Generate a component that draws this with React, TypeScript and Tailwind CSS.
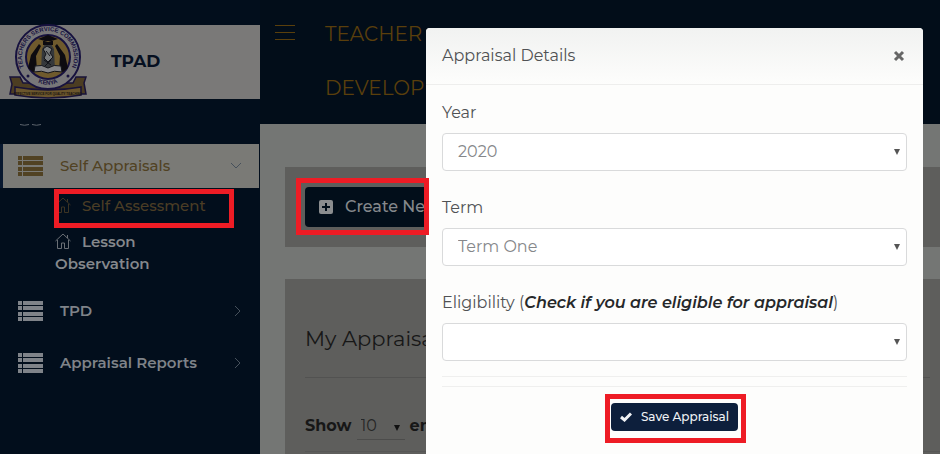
import type { ReactNode } from 'react';

const FONT = "font-['Montserrat','Inter','Liberation_Sans',sans-serif]";

function Highlight({ className }: { className: string }) {
  return (
    <span
      aria-hidden="true"
      className={`pointer-events-none absolute z-30 border-5 border-[#ee1c25] ${className}`}
    />
  );
}

function Crest() {
  return (
    <svg viewBox="0 0 78 76" className="h-[76px] w-[78px] shrink-0" role="img" aria-label="Teachers Service Commission Kenya">
      <defs>
        <path id="ringTop" d="M17.700 48 A26 26 0 1 1 60.300 48" />
        <path id="ringBottom" d="M25 56 Q39 65.500 53 56" />
      </defs>
      <path d="M1 53h10l3 6h50l3-6h10l-2 6 2 11H66l-3-4-24 3-24-3-3 4H1l2-10z" fill="#4c3d22" stroke="#191338" strokeWidth="1.5" />
      <circle cx="39" cy="33" r="32" fill="#787779" stroke="#17123f" strokeWidth="2" />
      <circle cx="39" cy="33" r="22" fill="#6f5a2d" stroke="#17123f" strokeWidth="2" />
      <path d="M19 44 22 31 30 20 32 22 27 32 28 47 24 48zM59 44 56 31 48 20 46 22 51 32 50 47 54 48z" fill="#0d0b10" />
      <path d="M32 47 33 25 36 20h6l3 5 1 22z" fill="#35383b" />
      <path d="M29 15 39 11 49 15 39 18zM34 17v4h10v-4z" fill="#0d0b10" />
      <path d="M34 25l4-3 5 3-2 4 3 4-5 5-4-4 2-4zM37 27l4 5M42 36l-6 6M35 36l7 5" fill="#777a7c" stroke="#121319" strokeWidth="1" />
      <path d="M26 42q7-2 13 2 6-4 13-2l1 6q-8-2-14 1-6-3-14-1z" fill="#858587" stroke="#121319" strokeWidth="1" />
      <g fill="#17123f" fontFamily="'Liberation Sans', sans-serif" fontWeight="700">
        <text fontSize="6">
          <textPath href="#ringTop" startOffset="50%" textAnchor="middle">TEACHERS SERVICE COMMISSION</textPath>
        </text>
        <text fontSize="6">
          <textPath href="#ringBottom" startOffset="50%" textAnchor="middle">KENYA</textPath>
        </text>
      </g>
      <circle cx="19" cy="52" r="1.5" fill="#17123f" />
      <circle cx="59" cy="52" r="1.5" fill="#17123f" />
      <path d="M6 63q33 6 66 0v8q-33 6-66 0z" fill="#6b562c" stroke="#191338" strokeWidth="1.5" />
      <text x="39" y="71" textAnchor="middle" fontSize="3" fontWeight="700" fill="#17110f" fontFamily="'Liberation Sans', sans-serif">
        EFFECTIVE SERVICE FOR QUALITY TEACHING
      </text>
    </svg>
  );
}

function ListIcon() {
  return (
    <svg viewBox="0 0 25 20" className="h-5 w-[25px] shrink-0" fill="currentColor" aria-hidden="true">
      {[0, 5, 11, 16].map((y) => (
        <g key={y}>
          <rect x="0" y={y} width="4" height="4" />
          <rect x="5" y={y} width="20" height="4" />
        </g>
      ))}
    </svg>
  );
}

function HomeIcon() {
  return (
    <svg viewBox="0 0 16 16" className="mr-[11px] inline-block size-4 align-[-2px] opacity-80" fill="none" stroke="currentColor" aria-hidden="true">
      <path d="M.5 8 8 1l7.500 7M2.500 7v8.500h4V10h3v5.500h4V7M12.500 5V2" />
    </svg>
  );
}

function Chevron({ down = false }: { down?: boolean }) {
  return (
    <svg viewBox="0 0 12 12" className="ml-auto size-3 shrink-0 text-[#46505b]" fill="none" stroke="currentColor" aria-hidden="true">
      <path d={down ? 'M1 3l5 5 5-5' : 'M4 1l5 5-5 5'} />
    </svg>
  );
}

function Caret({ className }: { className: string }) {
  return (
    <svg viewBox="0 0 6 6" className={`pointer-events-none absolute size-[6px] ${className}`} fill="currentColor" aria-hidden="true">
      <path d="M0 0h6L3 6z" />
    </svg>
  );
}

function MenuRow({ children }: { children: ReactNode }) {
  return (
    <a href="#" className="flex h-[52px] items-center pr-[17px] pl-[18px] text-[15px] font-semibold text-[#7f8389]">
      <ListIcon />
      <span className="ml-[17px]">{children}</span>
      <Chevron />
    </a>
  );
}

function Sidebar() {
  return (
    <aside className="w-[260px] shrink-0 bg-[#020e1c] pt-[25px]">
      <div className="flex h-[74px] items-center bg-[#7a7978] pl-[9px]">
        <Crest />
        <span className="ml-6 text-[17px] font-bold text-[#061021]">TPAD</span>
      </div>
      <svg viewBox="0 0 22 3" className="mt-[25px] ml-5 h-[3px] w-[22px]" fill="none" stroke="#5d646c" aria-hidden="true">
        <path d="M0 .5q4.500 1.500 9 0M12 .5q4.500 1.500 9 0" />
      </svg>
      <nav className="mt-[17px]">
        <a href="#" className="mr-px flex h-11 items-center border-l-3 border-[#08182f] bg-[#7a7a76] pr-[17px] pl-[15px] text-[15px] font-medium text-[#514223]">
          <ListIcon />
          <span className="ml-[17px]">Self Appraisals</span>
          <Chevron down />
        </a>
        <div className="pl-[55px] text-[15px] leading-[22px]">
          <a href="#" className="relative mt-[7px] block font-medium text-[#4b3d25]">
            <HomeIcon />
            Self Assessment
            <Highlight className="-top-[6px] -left-px h-[39px] w-[180px]" />
          </a>
          <a href="#" className="mt-[14px] block w-[120px] font-semibold text-[#85888c]">
            <HomeIcon />
            Lesson Observation
          </a>
        </div>
        <div className="mt-[10px]">
          <MenuRow>TPD</MenuRow>
          <MenuRow>Appraisal Reports</MenuRow>
        </div>
      </nav>
    </aside>
  );
}

function Page() {
  return (
    <div className="flex min-w-0 flex-1 flex-col bg-[#747674]">
      <header className="flex h-[124px] items-start bg-[#020d19] pt-[7px] text-[#5a3f0c]">
        <button type="button" aria-label="Toggle menu" className="mt-[17px] ml-[15px]">
          <svg viewBox="0 0 20 17" className="h-[17px] w-5" fill="none" stroke="currentColor" aria-hidden="true">
            <path d="M0 1.500h20M0 8.500h20M0 15.500h20" />
          </svg>
        </button>
        <h1 className="ml-[30px] text-[20px] leading-[54px]">
          TEACHER
          <br />
          DEVELOP
        </h1>
      </header>
      <main className="flex flex-1 flex-col pt-[43px] pl-[25px]">
        <section className="bg-[#5e5e5c] py-5 pl-5">
          <div className="relative w-[170px]">
            <button type="button" className="flex h-10 w-full items-center rounded bg-[#020e1a] pl-[14px] text-[16px] font-medium whitespace-nowrap text-[#85888c]">
              <svg viewBox="0 0 14 14" className="mr-3 size-[14px]" aria-hidden="true">
                <rect width="14" height="14" rx="2" fill="#8b8d8f" />
                <path d="M7 3v8M3 7h8" stroke="#020e1a" strokeWidth="2" />
              </svg>
              Create New
            </button>
            <Highlight className="-top-[9px] -left-[9px] h-[57px] w-[133px]" />
          </div>
        </section>
        <section className="mt-8 flex-1 bg-[#5e5e5c] pl-5">
          <h2 className="mr-[10px] border-b border-[#525251] pt-[44px] pb-[22px] text-[21px] leading-8 text-[#171717]">My Appraisals</h2>
          <div className="mt-[36px] flex h-6 items-center text-[16px] font-bold text-[#171717]">
            <label htmlFor="page-size">Show</label>
            <span className="relative ml-[5px] flex">
              <select id="page-size" className="h-[27px] w-12 appearance-none border-b border-[#4c4c4b] px-1 text-[16px] font-normal text-[#262626]">
                <option>10</option>
              </select>
              <Caret className="top-3 right-[5px] text-[#111]" />
            </span>
            <span className="ml-[5px]">entries</span>
          </div>
          <div className="mt-[13px] border-t border-[#565655]" />
        </section>
      </main>
    </div>
  );
}

function Field({ id, label, option }: { id: string; label: ReactNode; option: string }) {
  return (
    <div className="mb-[25px]">
      <label htmlFor={id} className="mb-2 block leading-6">{label}</label>
      <div className="relative">
        <select id={id} className="block h-[38px] w-full appearance-none rounded border border-[#d9dadb] bg-white px-[15px] text-[16px] text-[#85878a]">
          <option>{option}</option>
        </select>
        <Caret className="top-4 right-[7px] text-[#555]" />
      </div>
    </div>
  );
}

function AppraisalDialog() {
  return (
    <div role="dialog" aria-labelledby="dialog-title" className="absolute top-7 right-[17px] bottom-0 z-20 w-[497px] rounded-t bg-[#fdfdfc] text-[16px] text-[#505254]">
      <div className="flex h-[57px] items-center justify-between rounded-t border-b border-[#eeeeed] bg-linear-to-b from-[#f1f2f1] to-[#fdfdfc] pr-[18px] pl-4">
        <h2 id="dialog-title">Appraisal Details</h2>
        <button type="button" aria-label="Close" className="text-[#666]">
          <svg viewBox="0 0 12 12" className="size-3" fill="none" stroke="currentColor" strokeWidth="3" aria-hidden="true">
            <path d="M2 2l8 8M10 2l-8 8" />
          </svg>
        </button>
      </div>
      <form className="px-4 pt-4">
        <Field id="year" label="Year" option="2020" />
        <Field id="term" label="Term" option="Term One" />
        <Field
          id="eligibility"
          label={<>Eligibility (<strong className="font-semibold text-[#26282a] italic">Check if you are eligible for appraisal</strong>)</>}
          option=""
        />
        <div className="-mt-[10px] h-[11px] border-y border-[#efefee]" />
        <div className="mt-4 flex justify-center">
          <div className="relative">
            <button type="button" className="flex h-7 w-[127px] items-center justify-center gap-[9px] rounded-sm bg-[#0d1f3c] text-[12px] font-medium whitespace-nowrap text-[#f0f2f5]">
              <svg viewBox="0 0 12 10" className="h-[10px] w-3" fill="none" stroke="currentColor" strokeWidth="3" aria-hidden="true">
                <path d="M1 5l3.500 3L11 1.500" />
              </svg>
              Save Appraisal
            </button>
            <Highlight className="-top-[9px] -left-[6px] h-[49px] w-[141px]" />
          </div>
        </div>
      </form>
    </div>
  );
}

export default function App() {
  return (
    <div className={`relative flex h-screen overflow-hidden ${FONT}`}>
      <Sidebar />
      <Page />
      <AppraisalDialog />
    </div>
  );
}
